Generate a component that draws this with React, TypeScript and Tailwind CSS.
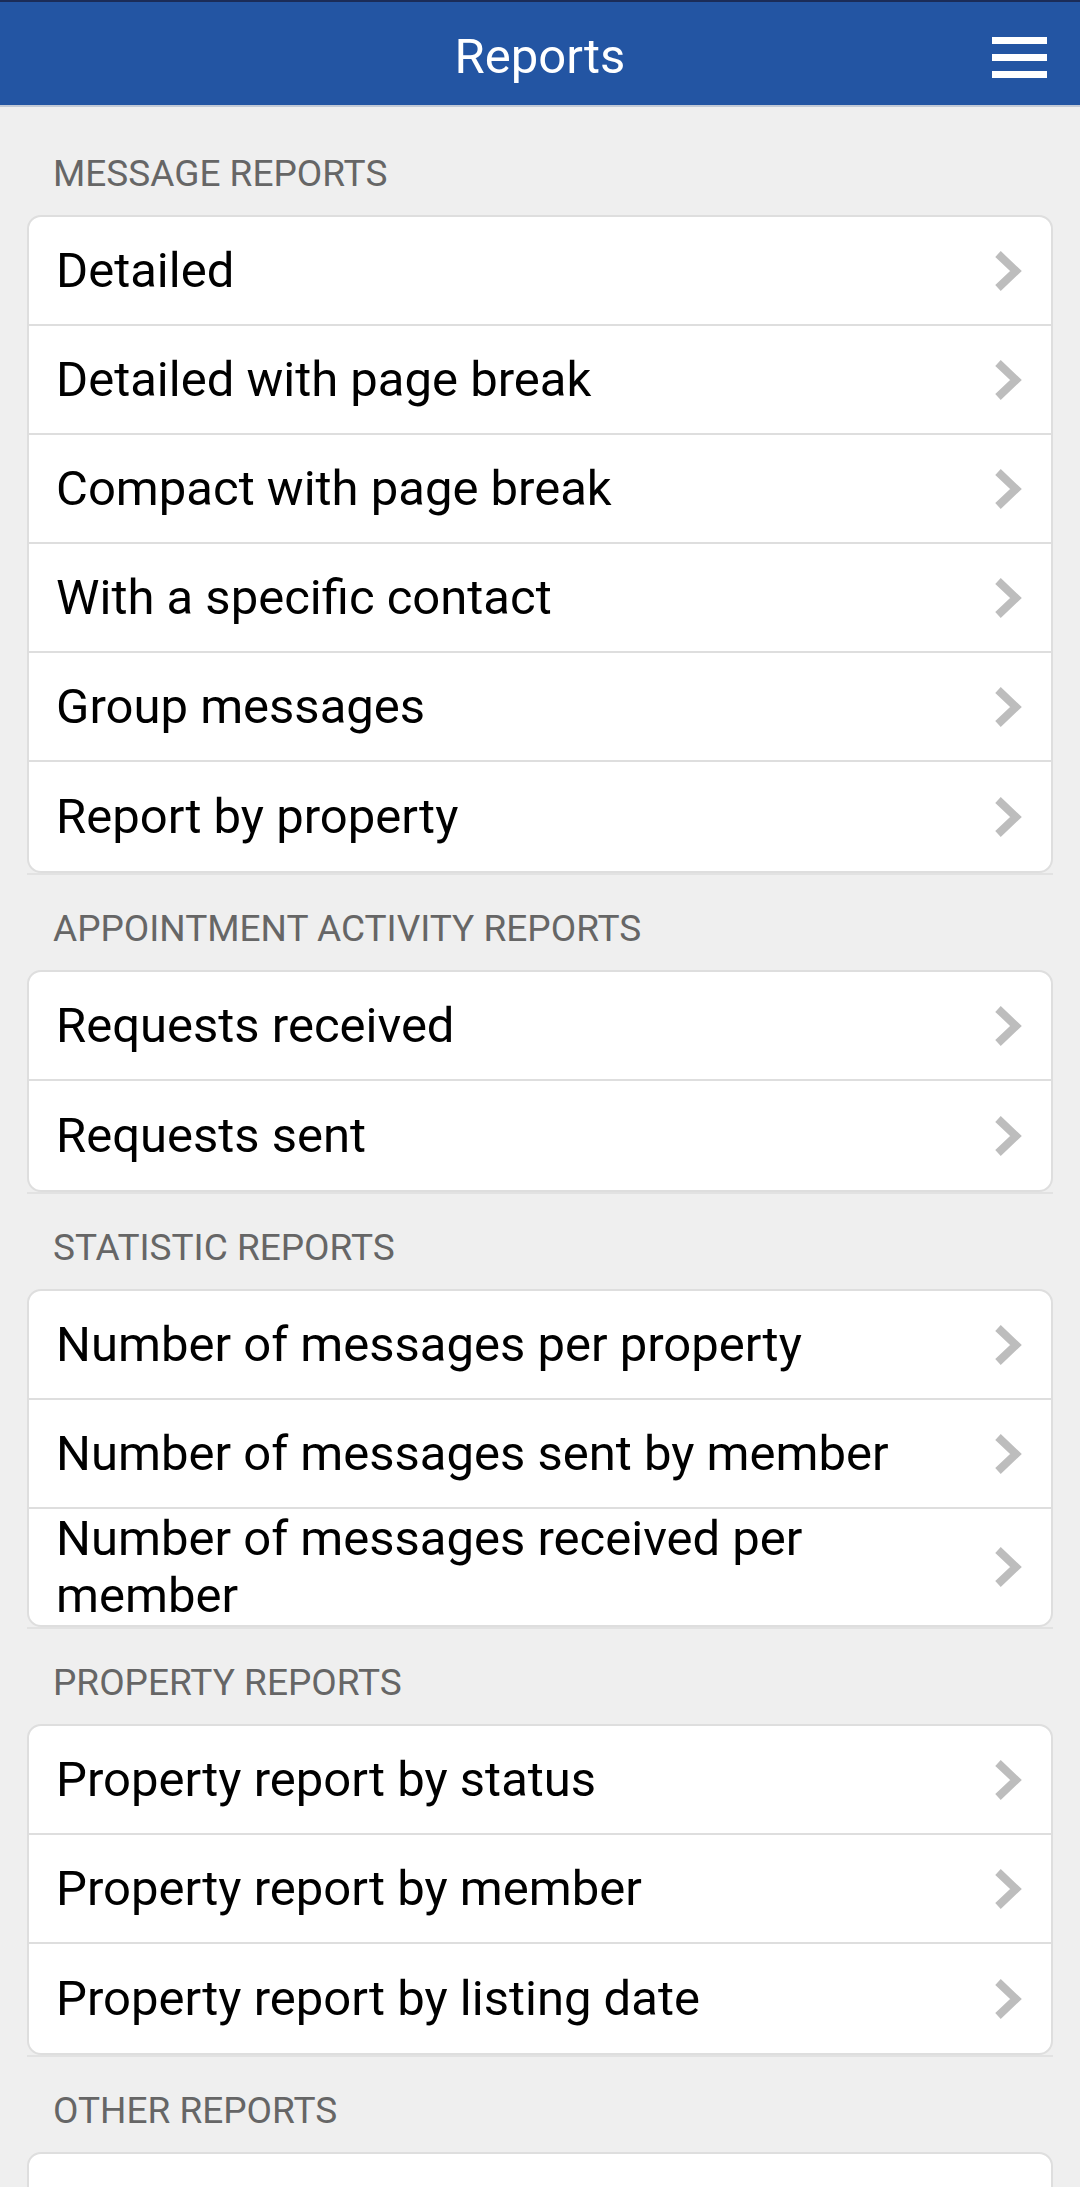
import React from "react";

type Section = { title: string; items: string[] };

const SECTIONS: Section[] = [
  {
    title: "Message reports",
    items: [
      "Detailed",
      "Detailed with page break",
      "Compact with page break",
      "With a specific contact",
      "Group messages",
      "Report by property",
    ],
  },
  {
    title: "Appointment activity reports",
    items: ["Requests received", "Requests sent"],
  },
  {
    title: "Statistic reports",
    items: [
      "Number of messages per property",
      "Number of messages sent by member",
      "Number of messages received per member",
    ],
  },
  {
    title: "Property reports",
    items: [
      "Property report by status",
      "Property report by member",
      "Property report by listing date",
    ],
  },
  {
    title: "Other reports",
    items: ["Activity log"],
  },
];

function Chevron() {
  return (
    <svg width="28" height="42" viewBox="0 0 28 42" aria-hidden>
      <polyline
        points="4,4 22,21 4,38"
        fill="none"
        stroke="#bdbdbd"
        strokeWidth="8"
        strokeLinecap="butt"
        strokeLinejoin="miter"
      />
    </svg>
  );
}

function HamburgerIcon() {
  return (
    <div className="flex w-[55px] flex-col gap-[10px]">
      <span className="block h-[7px] w-full bg-white" />
      <span className="block h-[7px] w-full bg-white" />
      <span className="block h-[7px] w-full bg-white" />
    </div>
  );
}

function ReportRow({ label, last }: { label: string; last: boolean }) {
  return (
    <button
      type="button"
      className={`flex min-h-[109px] w-full items-center py-[1px] pl-[27px] pr-[29px] text-left ${
        last ? "" : "border-b-2 border-[#dedede]"
      }`}
    >
      <span className="min-w-0 flex-1 pr-[40px] text-[49px] leading-[57px] text-black">
        {label}
      </span>
      <span className="flex w-[28px] shrink-0 items-center">
        <Chevron />
      </span>
    </button>
  );
}

export default function App() {
  return (
    <div
      className="h-[2187px] overflow-hidden bg-[#efefef]"
      style={{ fontFamily: "Roboto, 'Noto Sans', sans-serif" }}
    >
      <header className="relative flex h-[105px] items-center justify-center border-t-2 border-[#1b2c58] bg-[#2355a3] pt-[5px] shadow-[0_2px_0_#c3cad6]">
        <h1 className="text-[49px] font-normal leading-none text-white">Reports</h1>
        <div className="absolute right-[33px] top-[35px]">
          <HamburgerIcon />
        </div>
      </header>

      <main className="pt-[15px]">
        {SECTIONS.map((section) => (
          <section key={section.title}>
            <p className="pb-[21px] pl-[53px] pt-[34px] text-[37px] uppercase leading-[40px] text-[#666666]">
              {section.title}
            </p>
            <div className="mx-[27px] border-b-2 border-[#e2e2e2]">
              <div className="rounded-[14px] border-2 border-[#dedede] bg-white">
                {section.items.map((item, i) => (
                  <ReportRow key={item} label={item} last={i === section.items.length - 1} />
                ))}
              </div>
            </div>
          </section>
        ))}
      </main>
    </div>
  );
}
